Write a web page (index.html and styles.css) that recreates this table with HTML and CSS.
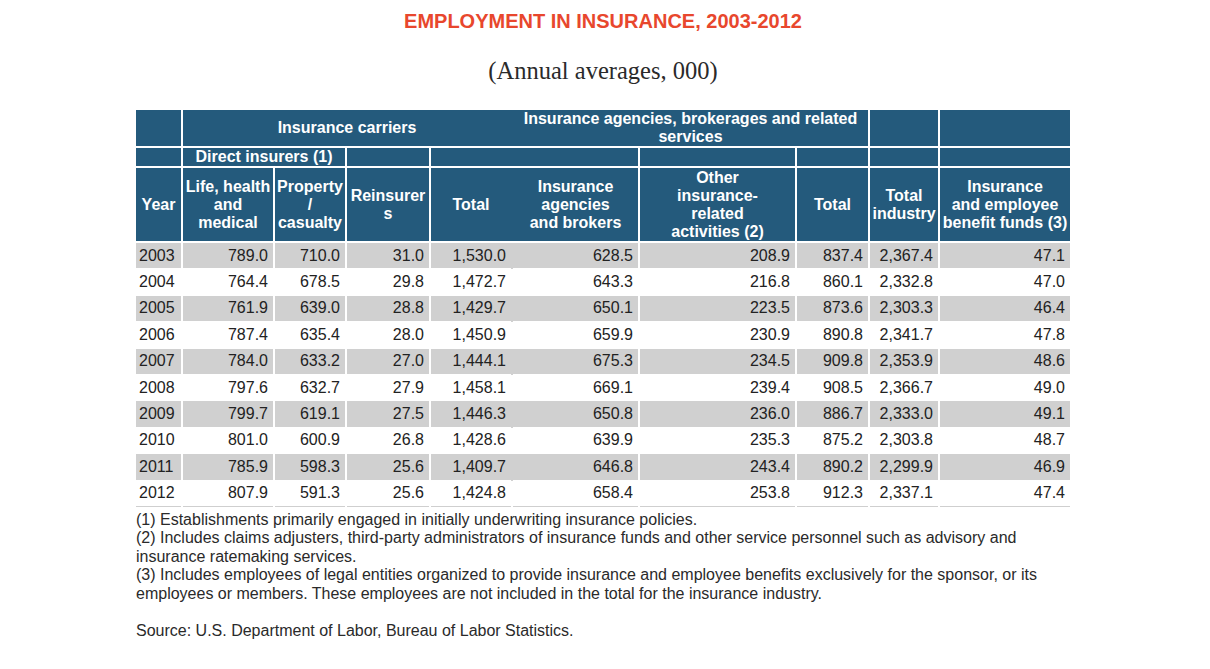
FILE: index.html
```html
<!DOCTYPE html>
<html lang="en">
<head>
<meta charset="utf-8">
<title>Employment in Insurance, 2003-2012</title>
<link rel="stylesheet" href="styles.css">
</head>
<body>
<div class="page">
  <h1 class="title">EMPLOYMENT IN INSURANCE, 2003-2012</h1>
  <p class="subtitle">(Annual averages, 000)</p>
  <table class="data">
    <colgroup>
      <col class="c-year"><col class="c-life"><col class="c-prop"><col class="c-rein"><col class="c-tot1">
      <col class="c-agen"><col class="c-other"><col class="c-tot2"><col class="c-ind"><col class="c-fund">
    </colgroup>
    <thead>
      <tr class="h1">
        <th></th>
        <th colspan="4" class="nr">Insurance carriers</th>
        <th colspan="3" class="nl top">Insurance agencies, brokerages and related<br>services</th>
        <th></th>
        <th></th>
      </tr>
      <tr class="h2">
        <th></th>
        <th colspan="2">Direct insurers (1)</th>
        <th></th>
        <th colspan="2"></th>
        <th></th>
        <th></th>
        <th></th>
        <th></th>
      </tr>
      <tr class="h3">
        <th>Year</th>
        <th>Life, health<br>and<br>medical</th>
        <th>Property<br>/<br>casualty</th>
        <th>Reinsurer<br>s</th>
        <th class="nr">Total</th>
        <th class="nl">Insurance<br>agencies<br>and brokers</th>
        <th>Other<br>insurance-<br>related<br>activities (2)</th>
        <th>Total</th>
        <th>Total<br>industry</th>
        <th>Insurance<br>and employee<br>benefit funds (3)</th>
      </tr>
    </thead>
    <tbody>
      <tr class="g"><td class="yr">2003</td><td>789.0</td><td>710.0</td><td>31.0</td><td class="nr">1,530.0</td><td class="nl">628.5</td><td>208.9</td><td>837.4</td><td>2,367.4</td><td>47.1</td></tr>
      <tr><td class="yr">2004</td><td>764.4</td><td>678.5</td><td>29.8</td><td class="nr">1,472.7</td><td class="nl">643.3</td><td>216.8</td><td>860.1</td><td>2,332.8</td><td>47.0</td></tr>
      <tr class="g"><td class="yr">2005</td><td>761.9</td><td>639.0</td><td>28.8</td><td class="nr">1,429.7</td><td class="nl">650.1</td><td>223.5</td><td>873.6</td><td>2,303.3</td><td>46.4</td></tr>
      <tr><td class="yr">2006</td><td>787.4</td><td>635.4</td><td>28.0</td><td class="nr">1,450.9</td><td class="nl">659.9</td><td>230.9</td><td>890.8</td><td>2,341.7</td><td>47.8</td></tr>
      <tr class="g"><td class="yr">2007</td><td>784.0</td><td>633.2</td><td>27.0</td><td class="nr">1,444.1</td><td class="nl">675.3</td><td>234.5</td><td>909.8</td><td>2,353.9</td><td>48.6</td></tr>
      <tr><td class="yr">2008</td><td>797.6</td><td>632.7</td><td>27.9</td><td class="nr">1,458.1</td><td class="nl">669.1</td><td>239.4</td><td>908.5</td><td>2,366.7</td><td>49.0</td></tr>
      <tr class="g"><td class="yr">2009</td><td>799.7</td><td>619.1</td><td>27.5</td><td class="nr">1,446.3</td><td class="nl">650.8</td><td>236.0</td><td>886.7</td><td>2,333.0</td><td>49.1</td></tr>
      <tr><td class="yr">2010</td><td>801.0</td><td>600.9</td><td>26.8</td><td class="nr">1,428.6</td><td class="nl">639.9</td><td>235.3</td><td>875.2</td><td>2,303.8</td><td>48.7</td></tr>
      <tr class="g"><td class="yr">2011</td><td>785.9</td><td>598.3</td><td>25.6</td><td class="nr">1,409.7</td><td class="nl">646.8</td><td>243.4</td><td>890.2</td><td>2,299.9</td><td>46.9</td></tr>
      <tr class="last"><td class="yr">2012</td><td>807.9</td><td>591.3</td><td>25.6</td><td class="nr">1,424.8</td><td class="nl">658.4</td><td>253.8</td><td>912.3</td><td>2,337.1</td><td>47.4</td></tr>
    </tbody>
  </table>
  <div class="notes">
    <p>(1) Establishments primarily engaged in initially underwriting insurance policies.</p>
    <p>(2) Includes claims adjusters, third-party administrators of insurance funds and other service personnel such as advisory and insurance ratemaking services.</p>
    <p>(3) Includes employees of legal entities organized to provide insurance and employee benefits exclusively for the sponsor, or its employees or members. These employees are not included in the total for the insurance industry.</p>
    <p class="source">Source: U.S. Department of Labor, Bureau of Labor Statistics.</p>
  </div>
</div>
</body>
</html>
```

FILE: styles.css
```css
html, body {
  margin: 0;
  padding: 0;
  background: #ffffff;
}
body {
  padding-right: 4px;
  font-family: "Liberation Sans", Arial, sans-serif;
  color: #222222;
}
.page {
  width: 934px;
  margin: 0 auto;
}
.title {
  margin: 0;
  padding-top: 9px;
  font-size: 20px;
  line-height: 24px;
  font-weight: bold;
  color: #e8472d;
  text-align: center;
}
.subtitle {
  margin: 23px 0 0 0;
  font-family: "Liberation Serif", "Times New Roman", serif;
  font-size: 24.5px;
  line-height: 30px;
  color: #2a2a2a;
  text-align: center;
}
.data {
  margin-top: 24px;
  width: 934px;
  table-layout: fixed;
  border-collapse: collapse;
}
.c-year { width: 46px; }
.c-life { width: 92px; }
.c-prop { width: 72px; }
.c-rein { width: 84px; }
.c-tot1 { width: 82px; }
.c-agen { width: 127px; }
.c-other { width: 157px; }
.c-tot2 { width: 73px; }
.c-ind { width: 70px; }
.c-fund { width: 131px; }

.data th {
  background: #245a7c;
  color: #ffffff;
  font-weight: bold;
  font-size: 16px;
  line-height: 18px;
  text-align: center;
  vertical-align: middle;
  padding: 0;
  border: 2px solid #ffffff;
  white-space: nowrap;
}
.data thead tr:first-child th { border-top: none; }
.data th:first-child { border-left: none; }
.data th:last-child { border-right: none; }
.data .h1 th { height: 36px; }
.data .h1 th.top { vertical-align: top; }
.data .h2 th { height: 18px; }
.data .h3 th { height: 73px; }
.data th.nr { border-right-color: #245a7c; }
.data th.nl { border-left-color: #245a7c; }

.data td {
  font-size: 16px;
  line-height: 18px;
  height: 25.4px;
  padding: 0 5px 0 3px;
  text-align: right;
  vertical-align: middle;
  color: #222222;
  border: 2px solid #ffffff;
  border-top-width: 1px;
  border-bottom-width: 1px;
  white-space: nowrap;
}
.data td:first-child { border-left: none; }
.data td:last-child { border-right: none; }
.data tr.g td { background: #d0d0d0; }
.data td.yr { text-align: left; }
.data tr.g td.nr { border-right-color: #d0d0d0; }
.data tr.g td.nl { border-left-color: #d0d0d0; }
.data tr.last td { border-bottom: 1px solid #cfcfcf; }

.notes {
  margin-top: 4px;
  font-size: 16px;
  line-height: 18.5px;
  color: #2a2a2a;
}
.notes p { margin: 0; }
.notes p.source { margin-top: 19px; }
```
